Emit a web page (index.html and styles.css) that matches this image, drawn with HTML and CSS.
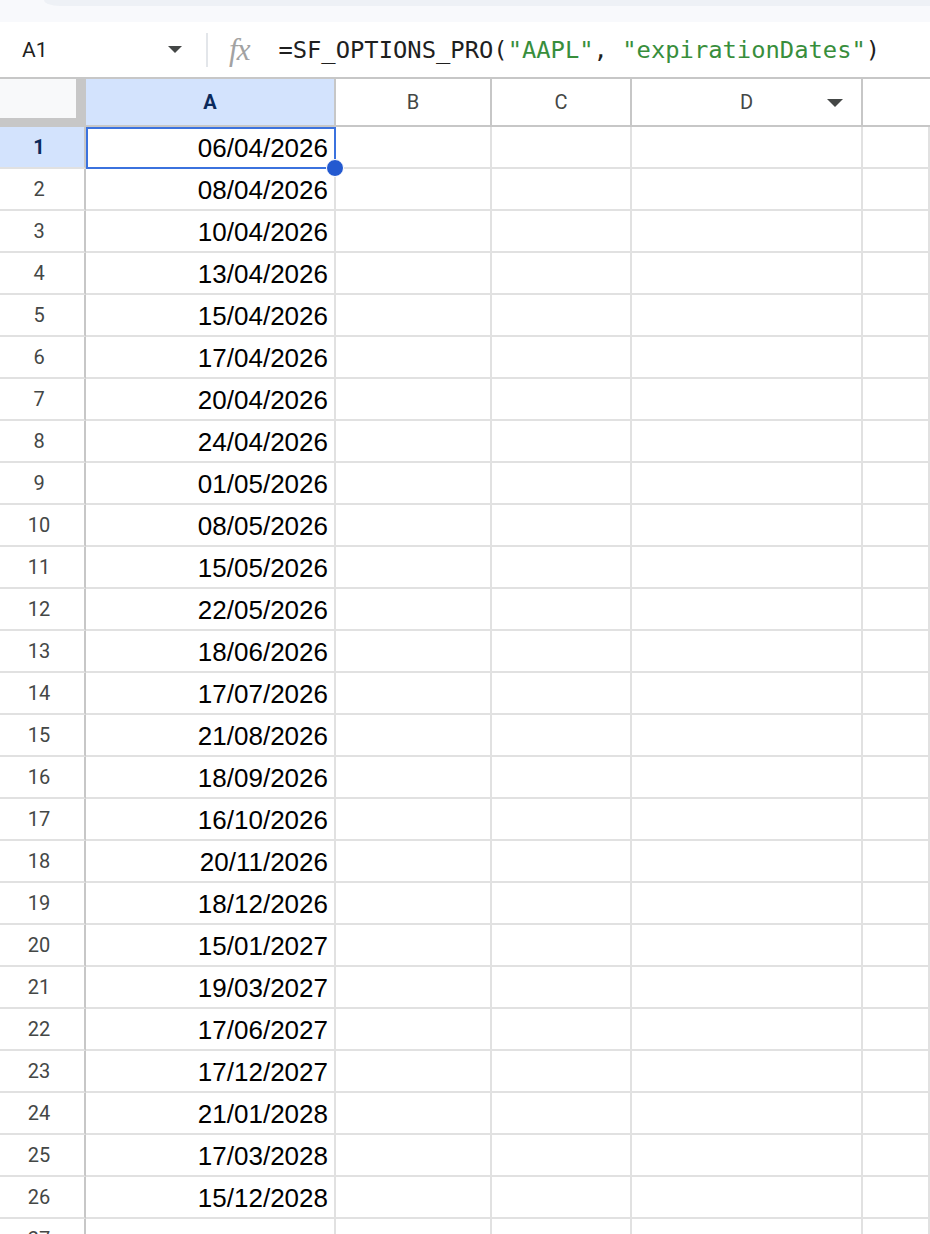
FILE: index.html
```html
<!DOCTYPE html>
<html lang="en">
<head>
  <meta charset="UTF-8" />
  <meta name="viewport" content="width=device-width, initial-scale=1.0" />
  <title>Options expirations - Sheet</title>
  <link rel="stylesheet" href="styles.css">
</head>
<body>
  <div class="topbar">
    <div class="search-edge"></div>
  </div>

  <div class="formula-bar">
    <div class="name-box">
      <span>A1</span>
      <span class="caret"></span>
    </div>
    <div class="divider"></div>
    <div class="fx"><i>f</i><i>x</i></div>
    <div class="formula">=SF_OPTIONS_PRO(<span class="str">"AAPL"</span>, <span class="str">"expirationDates"</span>)</div>
  </div>

  <div class="sheet" id="sheet">
    <div class="corner"></div>
    <div class="colhead selected">A</div>
    <div class="colhead">B</div>
    <div class="colhead">C</div>
    <div class="colhead">D<span class="filter"></span></div>
    <div class="colhead last"></div>
  </div>

  <script>
    const dates = [
      '06/04/2026', '08/04/2026', '10/04/2026', '13/04/2026', '15/04/2026',
      '17/04/2026', '20/04/2026', '24/04/2026', '01/05/2026', '08/05/2026',
      '15/05/2026', '22/05/2026', '18/06/2026', '17/07/2026', '21/08/2026',
      '18/09/2026', '16/10/2026', '20/11/2026', '18/12/2026', '15/01/2027',
      '19/03/2027', '17/06/2027', '17/12/2027', '21/01/2028', '17/03/2028',
      '15/12/2028', ''
    ];

    const sheet = document.getElementById('sheet');

    dates.forEach((date, i) => {
      const head = document.createElement('div');
      head.className = 'rowhead' + (i === 0 ? ' selected' : '');
      head.innerText = i + 1;
      sheet.appendChild(head);

      for (let col = 0; col < 5; col++) {
        const cell = document.createElement('div');
        cell.className = 'cell';
        if (col === 0) {
          cell.innerText = date;
          if (i === 0) cell.classList.add('active');
        }
        sheet.appendChild(cell);
      }
    });
  </script>
</body>
</html>
```

FILE: styles.css
```css
* {
  margin: 0;
  padding: 0;
  box-sizing: border-box;
}

body {
  background: #fff;
  height: 1234px;
  overflow: hidden;
  font-family: Roboto, 'Liberation Sans', sans-serif;
}

/* strip above the formula bar */
.topbar {
  height: 22px;
  background: #f8f9fc;
}

.search-edge {
  height: 6px;
  margin-left: 44px;
  background: #eef1f6;
  border-bottom-left-radius: 16px 6px;
}

/* formula bar */
.formula-bar {
  height: 57px;
  display: flex;
  align-items: center;
  border-bottom: 2px solid #c7c7c7;
  background: #fff;
}

.name-box {
  width: 196px;
  padding: 0 14px 0 22px;
  display: flex;
  align-items: center;
  justify-content: space-between;
  font-size: 21px;
  color: #1f1f1f;
}

.caret {
  width: 0;
  height: 0;
  border-left: 7px solid transparent;
  border-right: 7px solid transparent;
  border-top: 7px solid #444746;
}

.divider {
  width: 2px;
  height: 34px;
  margin-left: 10px;
  background: #e3e6ea;
}

.fx {
  margin-left: 21px;
  font-family: 'Liberation Serif', serif;
  font-size: 31px;
  line-height: 1;
  color: #a2a2a2;
  letter-spacing: -1px;
}

.formula {
  margin-left: 29px;
  font-family: 'DejaVu Sans Mono', monospace;
  font-size: 23.8px;
  color: #1f1f1f;
  white-space: pre;
}

.formula .str {
  color: #388e3c;
}

/* grid */
.sheet {
  display: grid;
  grid-template-columns: 86px 250px 156px 140px 231px 1fr;
  grid-template-rows: 48px;
  grid-auto-rows: 42px;
}

.corner {
  background: #f8f9fa;
  border-right: 10px solid #c7c7c7;
  border-bottom: 9px solid #c7c7c7;
}

.colhead {
  position: relative;
  display: flex;
  align-items: center;
  justify-content: center;
  border-right: 2px solid #c7c7c7;
  border-bottom: 2px solid #c7c7c7;
  font-size: 20px;
  color: #444746;
}

.colhead.last {
  border-right: none;
}

.colhead.selected,
.rowhead.selected {
  background: #d3e3fd;
  color: #0b2a5c;
  font-weight: bold;
}

.filter {
  position: absolute;
  right: 18px;
  top: 20px;
  width: 0;
  height: 0;
  border-left: 8px solid transparent;
  border-right: 8px solid transparent;
  border-top: 8px solid #444746;
}

.rowhead {
  display: flex;
  align-items: center;
  justify-content: center;
  padding-right: 6px;
  border-right: 2px solid #c7c7c7;
  border-bottom: 2px solid #e1e1e1;
  font-size: 20px;
  color: #444746;
}

.cell {
  display: flex;
  align-items: center;
  justify-content: flex-end;
  padding-right: 6px;
  padding-top: 2px;
  border-right: 2px solid #e1e1e1;
  border-bottom: 2px solid #e1e1e1;
  font-family: 'Liberation Sans', Arial, sans-serif;
  font-size: 26px;
  color: #000;
}

.cell.active {
  position: relative;
  z-index: 1;
}

.cell.active::before {
  content: '';
  position: absolute;
  top: 0;
  left: 0;
  right: -2px;
  bottom: -2px;
  border: 2px solid #3b72de;
}

.cell.active::after {
  content: '';
  position: absolute;
  right: -10px;
  bottom: -10px;
  width: 16px;
  height: 16px;
  border-radius: 50%;
  background: #2359d0;
  border: 1px solid #fff;
}
```
